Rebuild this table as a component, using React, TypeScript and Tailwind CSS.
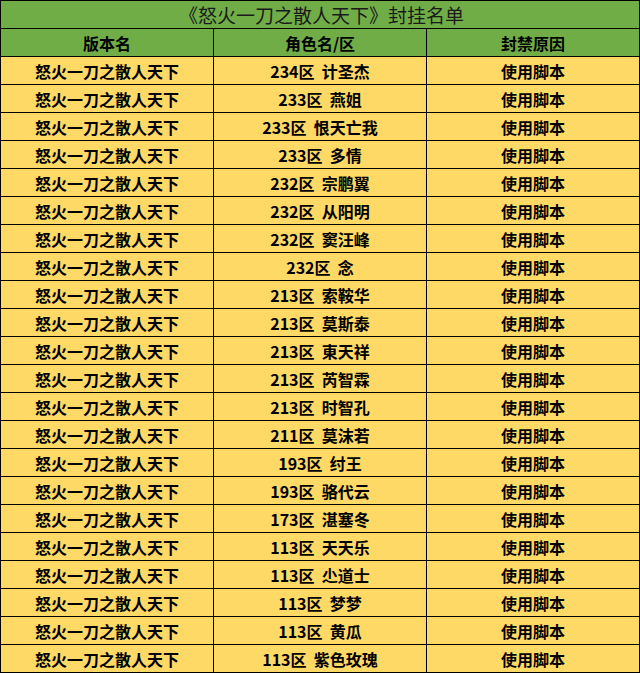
import { Fragment } from 'react';

const rows: [string, string][] = [
  ['234区', '计圣杰'],
  ['233区', '燕姐'],
  ['233区', '恨天亡我'],
  ['233区', '多情'],
  ['232区', '宗鹏翼'],
  ['232区', '从阳明'],
  ['232区', '窦汪峰'],
  ['232区', '念'],
  ['213区', '索鞍华'],
  ['213区', '莫斯泰'],
  ['213区', '東天祥'],
  ['213区', '芮智霖'],
  ['213区', '时智孔'],
  ['211区', '莫沫若'],
  ['193区', '纣王'],
  ['193区', '骆代云'],
  ['173区', '湛塞冬'],
  ['113区', '天天乐'],
  ['113区', '尐道士'],
  ['113区', '梦梦'],
  ['113区', '黄瓜'],
  ['113区', '紫色玫瑰'],
];

const font = { fontFamily: '"Noto Sans CJK SC", "Noto Sans", sans-serif' };
const cell = 'bg-[#ffd966] flex items-center justify-center text-[16px] font-bold text-black leading-none';

export default function App() {
  return (
    <div className="w-[640px] h-[673px] bg-white" style={font}>
      <div className="grid grid-cols-[212px_212px_212px] auto-rows-[27px] gap-px p-px bg-black w-[640px]">
        <div className="col-span-3 bg-[#70ad47] flex items-center justify-center pl-[3px] text-[19px] text-[#1a1a1a] leading-none">
          《怒火一刀之散人天下》封挂名单
        </div>
        {['版本名', '角色名/区', '封禁原因'].map((h) => (
          <div key={h} className="bg-[#70ad47] flex items-center justify-center text-[16px] font-bold text-black leading-none">
            {h}
          </div>
        ))}
        {rows.map(([zone, name], i) => (
          <Fragment key={i}>
            <div className={cell}>怒火一刀之散人天下</div>
            <div className={`${cell} whitespace-pre`}>
              {zone}  {name}
            </div>
            <div className={cell}>使用脚本</div>
          </Fragment>
        ))}
      </div>
    </div>
  );
}
